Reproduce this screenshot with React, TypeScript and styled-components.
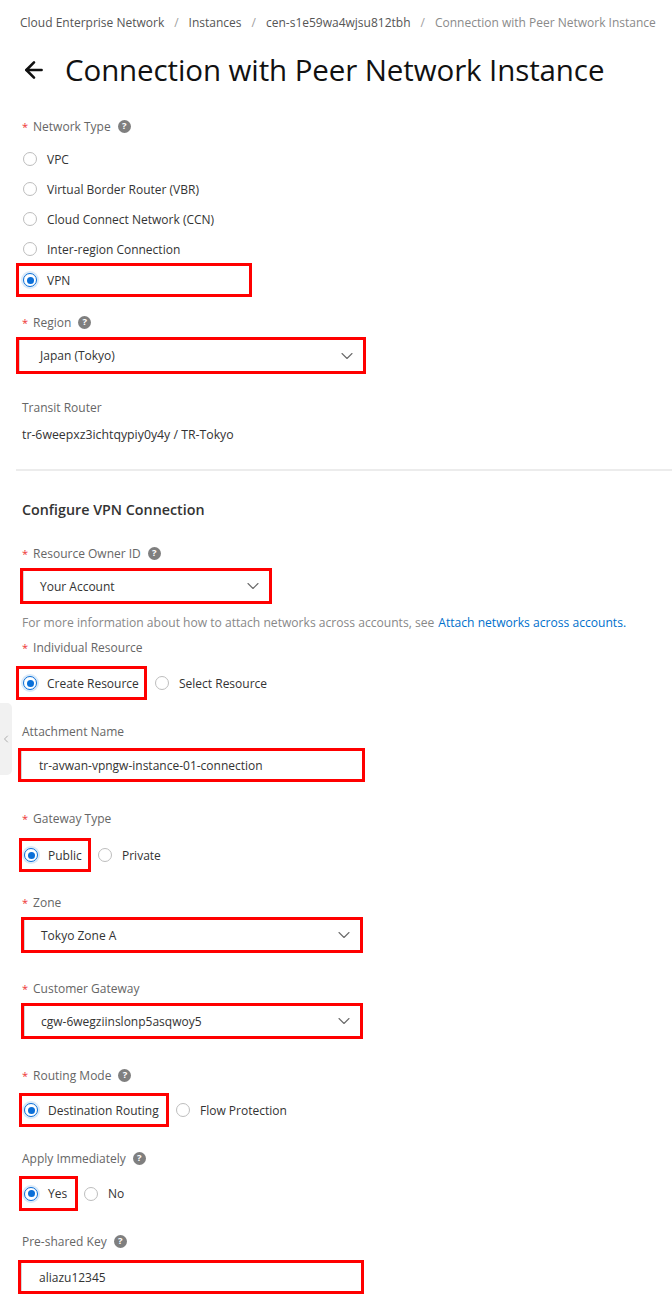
import React from 'react';
import styled, { createGlobalStyle } from 'styled-components';
import { ArrowLeft, ChevronDown, ChevronLeft } from 'lucide-react';

const GlobalStyle = createGlobalStyle`
  * { box-sizing: border-box; }
  body {
    margin: 0;
    background: #ffffff;
    font-family: "Open Sans", "Liberation Sans", sans-serif;
    color: #333;
  }
`;

const Page = styled.div`
  position: relative;
  width: 672px;
  min-height: 1306px;
  padding-top: 12px;
  overflow: hidden;
  background: #fff;
`;

const Breadcrumb = styled.nav`
  display: flex;
  align-items: center;
  height: 20px;
  padding-left: 20px;
  font-size: 12px;
  white-space: nowrap;
`;

const Crumb = styled.span<{ $current?: boolean }>`
  color: ${(p) => (p.$current ? '#8a8a8a' : '#555')};
`;

const Sep = styled.span`
  margin: 0 10px;
  color: #a0a0a0;
`;

const TitleRow = styled.header`
  display: flex;
  align-items: center;
  gap: 18px;
  height: 36px;
  margin-top: 20px;
  padding-left: 21px;
  color: #111;
`;

const Title = styled.h1`
  margin: 0;
  font-size: 29.5px;
  font-weight: 400;
  line-height: 36px;
  color: #111;
  letter-spacing: -0.1px;
`;

const Form = styled.div`
  display: flex;
  flex-direction: column;
  align-items: flex-start;
  padding-left: 22px;
`;

const Label = styled.div<{ $mt: number }>`
  display: flex;
  align-items: center;
  height: 20px;
  margin-top: ${(p) => p.$mt}px;
  font-size: 12px;
  color: #666;
`;

const Req = styled.span`
  color: #e33;
  font-size: 11px;
  margin-right: 5px;
`;

const Help = styled.span`
  display: inline-flex;
  align-items: center;
  justify-content: center;
  width: 13px;
  height: 13px;
  margin-left: 7px;
  border-radius: 50%;
  background: #7f7f7f;
  color: #fff;
  font-size: 9.5px;
  font-weight: 700;
  line-height: 1;
`;

const RadioList = styled.div<{ $mt: number }>`
  display: flex;
  flex-direction: column;
  margin-top: ${(p) => p.$mt}px;
`;

const RadioRow = styled.div<{ $mt: number }>`
  display: flex;
  align-items: center;
  gap: 6px;
  margin-top: ${(p) => p.$mt}px;
`;

const RadioItem = styled.label<{ $pad?: number }>`
  display: inline-flex;
  align-items: center;
  gap: 10px;
  height: 30px;
  padding-left: ${(p) => p.$pad ?? 1}px;
  font-size: 12px;
  color: #333;
  white-space: nowrap;
`;

const RadioDot = styled.span<{ $checked?: boolean }>`
  position: relative;
  flex: none;
  width: 14px;
  height: 14px;
  border-radius: 50%;
  background: #fff;
  border: 1px solid ${(p) => (p.$checked ? '#0a6fd8' : '#bdbdbd')};
  box-shadow: ${(p) => (p.$checked ? '0 0 0 2px rgba(10,111,216,0.15)' : 'none')};
  &::after {
    content: '';
    position: absolute;
    inset: 2.5px;
    border-radius: 50%;
    background: #0a6fd8;
    display: ${(p) => (p.$checked ? 'block' : 'none')};
  }
`;

const Highlight = styled.div<{ $dx: number; $mt?: number; $w: number; $h: number }>`
  display: flex;
  align-items: center;
  flex: none;
  width: ${(p) => p.$w}px;
  height: ${(p) => p.$h}px;
  margin-left: ${(p) => p.$dx}px;
  margin-top: ${(p) => p.$mt ?? 0}px;
  border: 3px solid #ff0000;
  background: #fff;
`;

const Field = styled.div<{ $pl: number }>`
  display: flex;
  align-items: center;
  justify-content: space-between;
  width: 100%;
  height: 100%;
  padding-left: ${(p) => p.$pl}px;
  padding-right: 6px;
  border-left: 1px solid #d6d6d6;
  font-size: 12px;
  color: #333;
  white-space: nowrap;
`;

const Chevron = styled(ChevronDown)`
  flex: none;
  color: #6b6b6b;
`;

const Value = styled.div<{ $mt: number }>`
  display: flex;
  align-items: center;
  height: 20px;
  margin-top: ${(p) => p.$mt}px;
  font-size: 12.3px;
  color: #333;
`;

const Divider = styled.hr<{ $mt: number }>`
  align-self: stretch;
  height: 2px;
  margin: ${(p) => p.$mt}px 0 0 -6px;
  border: none;
  background: #ececec;
`;

const SectionTitle = styled.h2<{ $mt: number }>`
  display: flex;
  align-items: center;
  height: 20px;
  margin: ${(p) => p.$mt}px 0 0 0;
  font-size: 14.3px;
  font-weight: 600;
  color: #333;
`;

const HelpText = styled.div<{ $mt: number }>`
  display: flex;
  align-items: center;
  height: 20px;
  margin-top: ${(p) => p.$mt}px;
  font-size: 12.1px;
  color: #888;
  white-space: nowrap;
`;

const Link = styled.a`
  margin-left: 4px;
  color: #0070cc;
  text-decoration: none;
`;

const EdgeTab = styled.div`
  position: absolute;
  left: 0;
  top: 703px;
  width: 12px;
  height: 72px;
  display: flex;
  align-items: center;
  justify-content: center;
  background: #f1f1f1;
  border-radius: 0 5px 5px 0;
  color: #9a9a9a;
  overflow: visible;
`;

type RadioProps = { label: string; checked?: boolean; pad?: number };
const Radio = ({ label, checked, pad }: RadioProps) => (
  <RadioItem $pad={pad}>
    <RadioDot $checked={checked} />
    {label}
  </RadioItem>
);

type FieldLabelProps = { text: string; mt: number; required?: boolean; help?: boolean };
const FieldLabel = ({ text, mt, required, help }: FieldLabelProps) => (
  <Label $mt={mt}>
    {required && <Req>*</Req>}
    {text}
    {help && <Help>?</Help>}
  </Label>
);

type BoxProps = { dx: number; mt: number; w: number; h: number; pl: number; text: string; select?: boolean };
const BoxField = ({ dx, mt, w, h, pl, text, select }: BoxProps) => (
  <Highlight $dx={dx} $mt={mt} $w={w} $h={h}>
    <Field $pl={pl}>
      <span>{text}</span>
      {select && <Chevron size={20} strokeWidth={1.3} />}
    </Field>
  </Highlight>
);

export default function App() {
  return (
    <>
      <GlobalStyle />
      <Page>
        <Breadcrumb>
          <Crumb>Cloud Enterprise Network</Crumb>
          <Sep>/</Sep>
          <Crumb>Instances</Crumb>
          <Sep>/</Sep>
          <Crumb>cen-s1e59wa4wjsu812tbh</Crumb>
          <Sep>/</Sep>
          <Crumb $current>Connection with Peer Network Instance</Crumb>
        </Breadcrumb>

        <TitleRow>
          <ArrowLeft size={26} strokeWidth={2.4} />
          <Title>Connection with Peer Network Instance</Title>
        </TitleRow>

        <Form>
          <FieldLabel text="Network Type" mt={28} required help />
          <RadioList $mt={8}>
            <Radio label="VPC" />
            <Radio label="Virtual Border Router (VBR)" />
            <Radio label="Cloud Connect Network (CCN)" />
            <Radio label="Inter-region Connection" />
          </RadioList>
          <Highlight $dx={-6} $mt={-1} $w={236} $h={34}>
            <Radio label="VPN" checked pad={4} />
          </Highlight>

          <FieldLabel text="Region" mt={15} required help />
          <BoxField dx={-6} mt={5} w={350} h={37} pl={20} text="Japan (Tokyo)" select />

          <Label $mt={23}>Transit Router</Label>
          <Value $mt={7}>tr-6weepxz3ichtqypiy0y4y / TR-Tokyo</Value>

          <Divider $mt={25} />

          <SectionTitle $mt={28}>Configure VPN Connection</SectionTitle>

          <FieldLabel text="Resource Owner ID" mt={24} required help />
          <BoxField dx={-2} mt={5} w={252} h={36} pl={16} text="Your Account" select />
          <HelpText $mt={8}>
            For more information about how to attach networks across accounts, see
            <Link href="#">Attach networks across accounts.</Link>
          </HelpText>

          <FieldLabel text="Individual Resource" mt={5} required />
          <RadioRow $mt={9}>
            <Highlight $dx={-6} $w={131} $h={34}>
              <Radio label="Create Resource" checked pad={4} />
            </Highlight>
            <Radio label="Select Resource" pad={2} />
          </RadioRow>

          <Label $mt={21}>Attachment Name</Label>
          <BoxField dx={-4} mt={7} w={347} h={34} pl={17} text="tr-avwan-vpngw-instance-01-connection" />

          <FieldLabel text="Gateway Type" mt={26} required />
          <RadioRow $mt={10}>
            <Highlight $dx={-3} $w={72} $h={34}>
              <Radio label="Public" checked pad={2} />
            </Highlight>
            <Radio label="Private" />
          </RadioRow>

          <FieldLabel text="Zone" mt={20} required />
          <BoxField dx={-1} mt={5} w={342} h={36} pl={16} text="Tokyo Zone A" select />

          <FieldLabel text="Customer Gateway" mt={25} required />
          <BoxField dx={-1} mt={5} w={342} h={36} pl={16} text="cgw-6wegziinslonp5asqwoy5" select />

          <FieldLabel text="Routing Mode" mt={26} required help />
          <RadioRow $mt={8}>
            <Highlight $dx={-3} $w={150} $h={34}>
              <Radio label="Destination Routing" checked pad={2} />
            </Highlight>
            <Radio label="Flow Protection" />
          </RadioRow>

          <Label $mt={21}>
            Apply Immediately
            <Help>?</Help>
          </Label>
          <RadioRow $mt={8}>
            <Highlight $dx={-3} $w={59} $h={35}>
              <Radio label="Yes" checked pad={2} />
            </Highlight>
            <Radio label="No" pad={0} />
          </RadioRow>

          <Label $mt={20}>
            Pre-shared Key
            <Help>?</Help>
          </Label>
          <BoxField dx={-4} mt={9} w={346} h={34} pl={17} text="aliazu12345" />
        </Form>

        <EdgeTab>
          <ChevronLeft size={14} strokeWidth={1.6} />
        </EdgeTab>
      </Page>
    </>
  );
}
